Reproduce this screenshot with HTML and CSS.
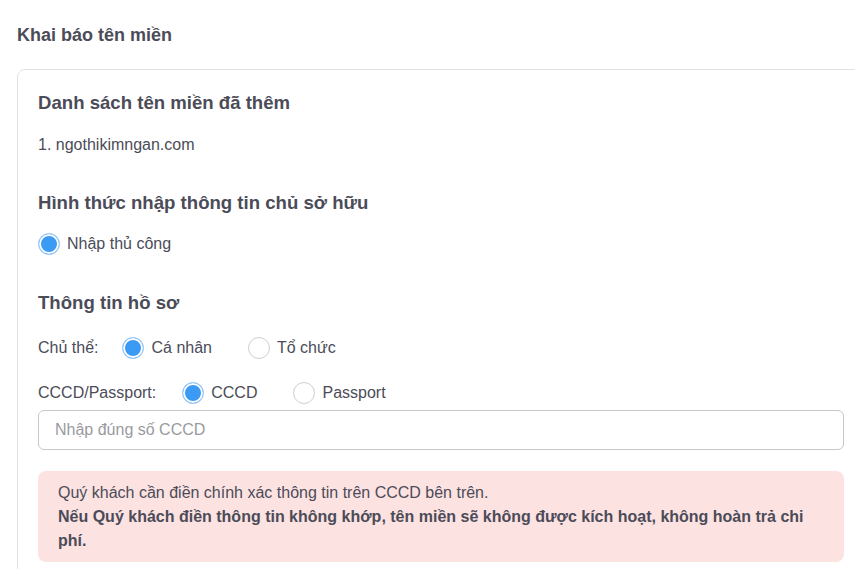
FILE: index.html
```html
<!DOCTYPE html>
<html lang="vi">
<head>
<meta charset="utf-8">
<title>Khai báo tên miền</title>
<link rel="stylesheet" href="styles.css">
</head>
<body>
<div class="page">
  <h1 class="page-title">Khai báo tên miền</h1>
  <div class="card">
    <h2 class="section-title">Danh sách tên miền đã thêm</h2>
    <div class="domain">1. ngothikimngan.com</div>

    <h2 class="section-title sec-gap">Hình thức nhập thông tin chủ sở hữu</h2>
    <div class="radio-row first-row">
      <label class="radio"><span class="dot checked"></span><span class="radio-label">Nhập thủ công</span></label>
    </div>

    <h2 class="section-title sec-gap2">Thông tin hồ sơ</h2>
    <div class="radio-row field-row">
      <span class="field-label">Chủ thể:</span>
      <label class="radio"><span class="dot checked"></span><span class="radio-label">Cá nhân</span></label>
      <label class="radio"><span class="dot"></span><span class="radio-label">Tổ chức</span></label>
    </div>
    <div class="radio-row field-row">
      <span class="field-label wide">CCCD/Passport:</span>
      <label class="radio"><span class="dot checked"></span><span class="radio-label">CCCD</span></label>
      <label class="radio"><span class="dot"></span><span class="radio-label">Passport</span></label>
    </div>
    <input class="text-input" type="text" placeholder="Nhập đúng số CCCD">

    <div class="alert">
      <p class="alert-line">Quý khách cần điền chính xác thông tin trên CCCD bên trên.</p>
      <p class="alert-line strong">Nếu Quý khách điền thông tin không khớp, tên miền sẽ không được kích hoạt, không hoàn trả chi phí.</p>
    </div>
  </div>
</div>
</body>
</html>
```

FILE: styles.css
```css
html, body {
  margin: 0;
  padding: 0;
  background: #ffffff;
  overflow: hidden;
}
body {
  font-family: "Liberation Sans", Arial, sans-serif;
  color: #4b4c58;
}
.page {
  padding: 23px 0 0 17px;
}
.page-title {
  margin: 0;
  font-size: 18px;
  line-height: 24px;
  font-weight: 700;
  color: #4b4c58;
}
.card {
  margin-top: 22px;
  width: 806px;
  border: 1px solid #e2e2e4;
  border-radius: 8px;
  padding: 21px 40px 20px 20px;
}
.section-title {
  margin: 0;
  font-size: 18.6px;
  line-height: 24px;
  font-weight: 700;
  color: #4b4c58;
}
.sec-gap { margin-top: 34px; }
.sec-gap2 { margin-top: 35px; }
.domain {
  margin-top: 18px;
  font-size: 16px;
  line-height: 24px;
}
.radio-row {
  display: flex;
  align-items: center;
  height: 24px;
  font-size: 16px;
}
.first-row { margin-top: 17px; }
.field-row { margin-top: 21px; }
.field-label {
  margin-right: 24px;
}
.field-label.wide {
  margin-right: 26px;
}
.radio {
  display: flex;
  align-items: center;
  margin-right: 36px;
}
.dot {
  box-sizing: border-box;
  width: 22px;
  height: 22px;
  border-radius: 50%;
  border: 1px solid #cfcfd3;
  background: #ffffff;
  margin-right: 7px;
}
.dot.checked {
  border: 1.5px solid #9fcaf5;
  background: #3a9af4;
  box-shadow: inset 0 0 0 2px #ffffff;
}
.radio-label { line-height: 24px; }
.text-input {
  display: block;
  box-sizing: border-box;
  width: 806px;
  height: 40px;
  margin-top: 5px;
  padding: 0 16px;
  border: 1px solid #c7c7cc;
  border-radius: 6px;
  font-family: "Liberation Sans", Arial, sans-serif;
  font-size: 16px;
  color: #4b4c58;
  outline: none;
}
.text-input::placeholder {
  color: #9a9aa0;
}
.alert {
  box-sizing: border-box;
  width: 806px;
  margin-top: 21px;
  padding: 10px 20px 9px 20px;
  background: #fde2e2;
  border-radius: 8px;
  font-size: 16px;
  line-height: 24px;
}
.alert-line {
  margin: 0;
}
.alert-line.strong {
  font-weight: 700;
}
```
